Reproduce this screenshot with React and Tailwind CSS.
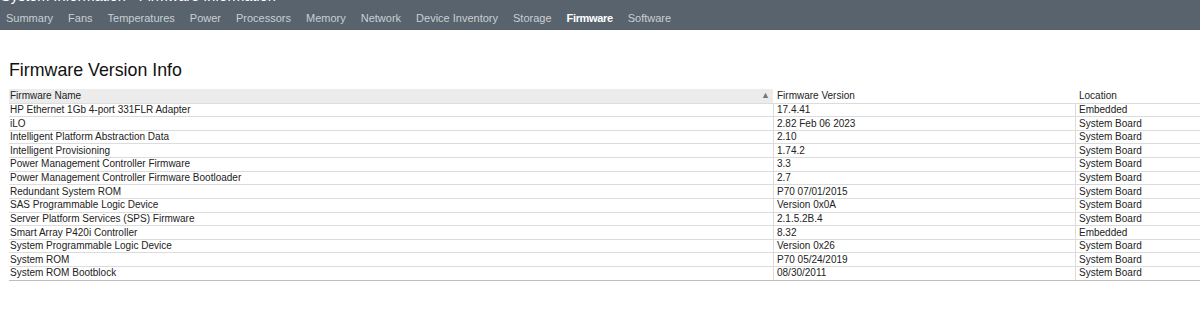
const NAV = [
  'Summary',
  'Fans',
  'Temperatures',
  'Power',
  'Processors',
  'Memory',
  'Network',
  'Device Inventory',
  'Storage',
  'Firmware',
  'Software',
];

const ROWS = [
  ['HP Ethernet 1Gb 4-port 331FLR Adapter', '17.4.41', 'Embedded'],
  ['iLO', '2.82 Feb 06 2023', 'System Board'],
  ['Intelligent Platform Abstraction Data', '2.10', 'System Board'],
  ['Intelligent Provisioning', '1.74.2', 'System Board'],
  ['Power Management Controller Firmware', '3.3', 'System Board'],
  ['Power Management Controller Firmware Bootloader', '2.7', 'System Board'],
  ['Redundant System ROM', 'P70 07/01/2015', 'System Board'],
  ['SAS Programmable Logic Device', 'Version 0x0A', 'System Board'],
  ['Server Platform Services (SPS) Firmware', '2.1.5.2B.4', 'System Board'],
  ['Smart Array P420i Controller', '8.32', 'Embedded'],
  ['System Programmable Logic Device', 'Version 0x26', 'System Board'],
  ['System ROM', 'P70 05/24/2019', 'System Board'],
  ['System ROM Bootblock', '08/30/2011', 'System Board'],
];

export default function App() {
  return (
    <div className="h-[326px] w-[1200px] overflow-hidden bg-white font-['Liberation_Sans',Arial,sans-serif] text-[#222]">
      {/* top bar */}
      <div className="h-[30px] overflow-hidden bg-[#58636d]">
        <div className="-mt-[13px] h-[18px] whitespace-nowrap pl-[1px] text-[14.5px] leading-[18px] text-white">
          System Information - Firmware Information
        </div>
        <nav className="mt-[7px] flex gap-[15px] pl-[6px] text-[11px] leading-[13px]">
          {NAV.map((item) => (
            <span
              key={item}
              className={item === 'Firmware' ? 'font-bold tracking-[-0.35px] text-white' : 'text-[#c9cfd4]'}
            >
              {item}
            </span>
          ))}
        </nav>
      </div>

      <div className="pl-[9px]">
        <h1 className="mt-[29px] h-[30px] text-[17.8px] leading-[22px] text-[#111]">Firmware Version Info</h1>

        <div className="w-[1250px] border-b border-[#bdbdbd] text-[10px]">
          <div className="flex h-[13.6px] items-center leading-[12px]">
            <div className="relative flex h-full w-[764px] items-center bg-[#ececec] pl-[1px]">
              Firmware Name
              <span className="absolute right-[3px] top-[1px] text-[9px] leading-[10px] text-[#777]">▲</span>
            </div>
            <div className="w-[302px] pl-[4px]">Firmware Version</div>
            <div className="flex-1 pl-[4px]">Location</div>
          </div>
          {ROWS.map(([name, version, location]) => (
            <div key={name} className="flex h-[13.64px] items-stretch border-t border-[#dcdcdc] leading-[12px]">
              <div className="flex w-[764px] items-center truncate pl-[1px]">{name}</div>
              <div className="flex w-[302px] items-center border-l border-[#dcdcdc] pl-[3px]">{version}</div>
              <div className="flex flex-1 items-center border-l border-[#dcdcdc] pl-[3px]">{location}</div>
            </div>
          ))}
        </div>
      </div>
    </div>
  );
}
